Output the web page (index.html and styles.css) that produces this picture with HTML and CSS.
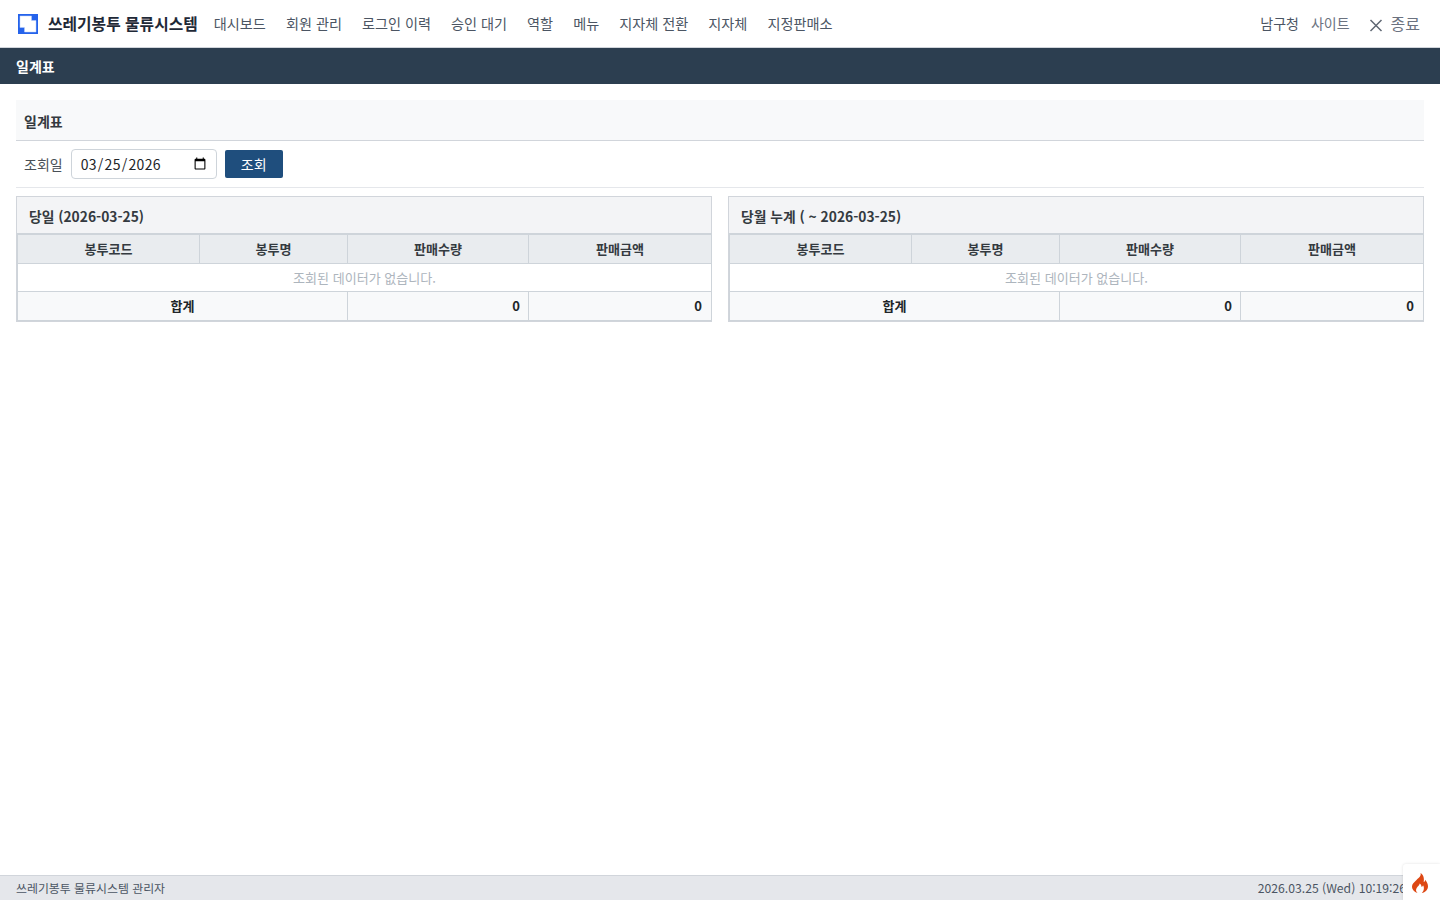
FILE: index.html
```html
<!DOCTYPE html>
<html lang="ko">
<head>
<meta charset="utf-8">
<title>일계표</title>
<link rel="stylesheet" href="styles.css">
</head>
<body>
<header class="topnav">
  <a class="brand">
    <svg class="logo" viewBox="0 0 20 20" width="20" height="20"><rect width="20" height="20" fill="#2563eb"/><path d="M2 2h11.500v4.500H18V18H6.500v-4.500H2z" fill="#fff" stroke="#bcd0fa" stroke-width=".5"/></svg>
    <span>쓰레기봉투 물류시스템</span>
  </a>
  <nav class="menu">
    <a>대시보드</a><a>회원 관리</a><a>로그인 이력</a><a>승인 대기</a><a>역할</a><a>메뉴</a><a>지자체 전환</a><a>지자체</a><a>지정판매소</a>
  </nav>
  <div class="user">
    <span class="org">남구청</span>
    <span class="site">사이트</span>
    <span class="logout"><svg viewBox="0 0 14 14" width="14" height="14"><path d="M1.500 2 12.500 13M12.500 2 1.500 13" stroke="#5f6773" stroke-width="1.500" fill="none"/></svg><span>종료</span></span>
  </div>
</header>
<div class="pagebar">일계표</div>
<main class="content">
  <h1 class="section-title">일계표</h1>
  <form class="filter">
    <label class="filter-label" for="d">조회일</label>
    <input class="date" id="d" type="date" value="2026-03-25">
    <button class="btn" type="button">조회</button>
  </form>
  <div class="cards">
    <section class="card">
      <h2 class="card-title">당일 (2026-03-25)</h2>
      <table class="tbl">
        <colgroup><col class="c1"><col class="c2"><col class="c3"><col class="c4"></colgroup>
        <thead><tr><th>봉투코드</th><th>봉투명</th><th>판매수량</th><th>판매금액</th></tr></thead>
        <tbody><tr><td colspan="4" class="empty">조회된 데이터가 없습니다.</td></tr></tbody>
        <tfoot><tr><td colspan="2" class="sum">합계</td><td class="num">0</td><td class="num">0</td></tr></tfoot>
      </table>
    </section>
    <section class="card">
      <h2 class="card-title">당월 누계 ( ~ 2026-03-25)</h2>
      <table class="tbl">
        <colgroup><col class="c1"><col class="c2"><col class="c3"><col class="c4"></colgroup>
        <thead><tr><th>봉투코드</th><th>봉투명</th><th>판매수량</th><th>판매금액</th></tr></thead>
        <tbody><tr><td colspan="4" class="empty">조회된 데이터가 없습니다.</td></tr></tbody>
        <tfoot><tr><td colspan="2" class="sum">합계</td><td class="num">0</td><td class="num">0</td></tr></tfoot>
      </table>
    </section>
  </div>
</main>
<footer class="footer">
  <span>쓰레기봉투 물류시스템 관리자</span>
  <span class="clock">2026.03.25 (Wed) 10:19:26</span>
</footer>
<div class="flame">
  <svg viewBox="0 0 16 20" width="16" height="20"><path d="M8.500 0C9.500 3 7 4.500 4.500 7 2 9.300 0 11 0 13.500 0 16.500 2.300 19 5.500 20 3.800 18.500 3.500 16.500 5 14.500c1-1.300 2.300-2.300 2.700-4 1.300 1 1.800 2 1.700 3.300 1 0 1.500-.7 1.600-1.500 1.300 1.800 1.400 5.200-1.200 7.700 3.500-.7 6.200-3.300 6.200-6.800 0-3-1.700-5-2.800-6.500 0 1.200-.6 2-1.500 2.300C12.300 5.500 11.800 2 8.500 0z" fill="#dd4814"/></svg>
</div>
</body>
</html>
```

FILE: styles.css
```css
* { box-sizing: border-box; }
html, body { height: 100%; }
body {
  margin: 0;
  display: flex;
  flex-direction: column;
  height: 900px;
  overflow: hidden;
  font-family: "Noto Sans CJK KR", "Noto Sans", sans-serif;
  font-size: 14px;
  color: #212529;
  background: #fff;
}
.topnav {
  height: 48px;
  flex: none;
  display: flex;
  align-items: center;
  padding: 0 20px 0 18px;
  background: #fff;
  border-bottom: 1px solid #d1d5db;
}
.brand { display: flex; align-items: center; gap: 10px; font-weight: 700; font-size: 15.8px; color: #1f2937; margin-right: 16px; }
.logo { display: block; }
.menu { display: flex; gap: 20px; padding-bottom: 2px; font-size: 14.16px; color: #4b5563; }
.user { margin-left: auto; display: flex; align-items: center; gap: 12px; padding-bottom: 2px; color: #6b7280; }
.org { color: #4b5563; }
.site { color: #6b7280; }
.logout { display: flex; align-items: center; gap: 8px; margin-left: 7px; font-size: 16px; }
.logout svg { margin-top: 5px; }
.pagebar {
  height: 36px;
  flex: none;
  padding: 0 16px;
  display: flex;
  align-items: center;
  background: #2c3e50;
  color: #fff;
  font-weight: 700;
}
.content { flex: 1; padding: 16px; }
.section-title {
  margin: 0;
  height: 41px;
  padding: 1px 8px 0;
  display: flex;
  align-items: center;
  font-size: 14px;
  font-weight: 700;
  color: #343a40;
  background: #f8f9fa;
  border-bottom: 1px solid #d1d5db;
}
.filter {
  height: 47px;
  display: flex;
  align-items: center;
  padding: 0 8px;
  border-bottom: 1px solid #e5e7eb;
}
.filter-label { color: #495057; margin-right: 8px; }
.date {
  width: 146px;
  height: 30px;
  padding: 0 7px 1px 8px;
  border: 1px solid #ced4da;
  border-radius: 4px;
  font-family: "Noto Sans CJK KR", sans-serif;
  font-size: 14px;
  letter-spacing: .3px;
  color: #212529;
  background: #fff;
  margin-right: 8px;
}
.btn {
  width: 58px;
  height: 28px;
  border: 0;
  border-radius: 2px;
  background: #1f4e7d;
  color: #fff;
  font: inherit;
  padding: 0;
}
.cards { display: grid; grid-template-columns: minmax(0, 1fr) minmax(0, 1fr); gap: 16px; margin-top: 8px; }
.card { border: 1px solid #d1d5db; background: #fff; }
.card-title {
  margin: 0;
  height: 36px;
  padding: 1px 12px 0;
  display: flex;
  align-items: center;
  font-size: 13.8px;
  font-weight: 700;
  color: #343a40;
  background: #f3f4f6;
}
.tbl {
  width: 100%;
  table-layout: fixed;
  border-collapse: collapse;
  font-size: 13.06px;
  border: 1px solid #ced4da;
  border-top-width: 2px;
}
.c1 { width: 182px; }
.c2 { width: 148px; }
.c3 { width: 181px; }
.c4 { width: 183px; }
.tbl th {
  height: 29px;
  padding: 0 0 1px;
  font-weight: 700;
  background: #e9ecef;
  color: #343a40;
  border-right: 1px solid #ced4da;
  border-bottom: 1px solid #ced4da;
}
.tbl td { height: 28px; padding: 0 8px; border-right: 1px solid #ced4da; border-bottom: 1px solid #ced4da; }
.empty { text-align: center; color: #adb5bd; }
.tbl tfoot td { height: 29px; padding-bottom: 1px; background: #f8f9fa; font-weight: 700; color: #212529; }
.tbl tfoot td:last-child { padding-right: 9px; }
.sum { text-align: center; }
.num { text-align: right; }
.footer {
  height: 25px;
  flex: none;
  display: flex;
  justify-content: space-between;
  align-items: center;
  padding: 0 34px 1px 16px;
  font-size: 11.92px;
  color: #4b5563;
  background: #e5e7eb;
  border-top: 1px solid #d1d5db;
}
.clock { font-size: 12.18px; }
.flame {
  position: absolute;
  right: 0;
  bottom: 0;
  width: 37px;
  height: 36px;
  padding: 9px 4px 0 0;
  background: #fff;
  display: flex;
  justify-content: center;
  align-items: flex-start;
  box-shadow: 0 0 3px rgba(0, 0, 0, .12);
  border-top-left-radius: 3px;
}
```
